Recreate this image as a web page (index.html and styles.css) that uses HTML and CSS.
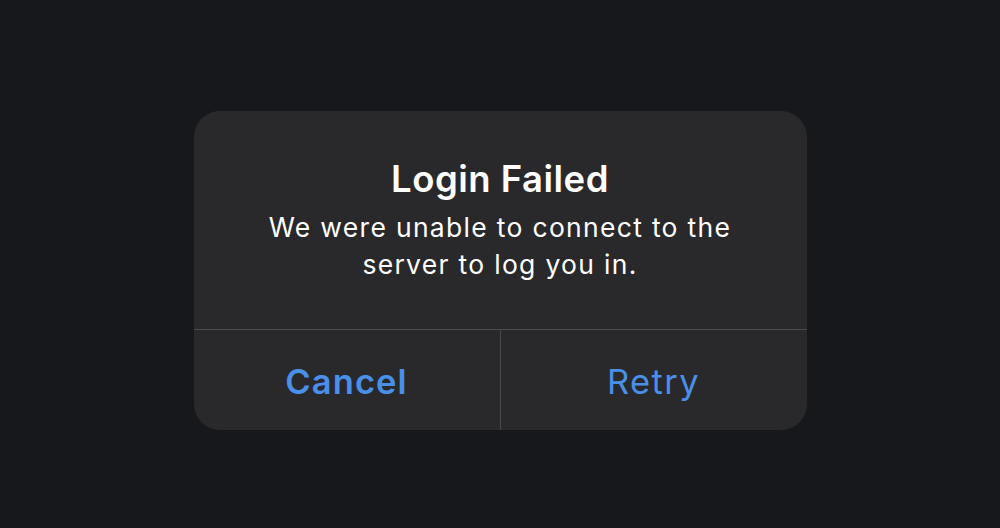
FILE: index.html
```html
<!DOCTYPE html>
<html lang="en">
<head>
<meta charset="utf-8">
<title>Login Failed</title>
<link rel="stylesheet" href="styles.css">
</head>
<body>
<div class="screen">
  <div class="alert" role="alertdialog">
    <div class="alert-content">
      <h1 class="alert-title">Login Failed</h1>
      <p class="alert-message">We were unable to connect to the<br>server to log you in.</p>
    </div>
    <div class="alert-actions">
      <button class="alert-btn alert-btn-cancel">Cancel</button>
      <button class="alert-btn alert-btn-retry">Retry</button>
    </div>
  </div>
</div>
</body>
</html>
```
FILE: styles.css
```css
html, body {
  margin: 0;
  padding: 0;
  background: #17181c;
}
.screen {
  width: 1000px;
  height: 528px;
  box-sizing: border-box;
  padding-top: 111px;
  display: flex;
  justify-content: center;
  align-items: flex-start;
  font-family: Inter, "Noto Sans", sans-serif;
}
.alert {
  width: 613px;
  background: #29292b;
  border-radius: 26px;
  overflow: hidden;
  display: flex;
  flex-direction: column;
}
.alert-content {
  height: 218px;
  box-sizing: border-box;
  padding-top: 46px;
  text-align: center;
  color: #ffffff;
}
.alert-title {
  margin: 0;
  font-size: 36.5px;
  font-weight: 600;
  line-height: 44px;
  letter-spacing: 0.5px;
}
.alert-message {
  margin: 8px 0 0;
  font-size: 26.5px;
  font-weight: 400;
  line-height: 37px;
  letter-spacing: 1.3px;
}
.alert-actions {
  display: flex;
  border-top: 1px solid #4a4a4d;
  height: 100px;
}
.alert-btn {
  flex: 1;
  background: transparent;
  border: none;
  margin: 0;
  padding: 2px 0 0;
  font-family: inherit;
  font-size: 34.5px;
  letter-spacing: 1.1px;
  color: #4a8fe8;
  cursor: pointer;
}
.alert-btn-cancel {
  font-weight: 600;
  border-right: 1px solid #4a4a4d;
}
.alert-btn-retry {
  font-weight: 400;
  letter-spacing: 1.4px;
}
```
